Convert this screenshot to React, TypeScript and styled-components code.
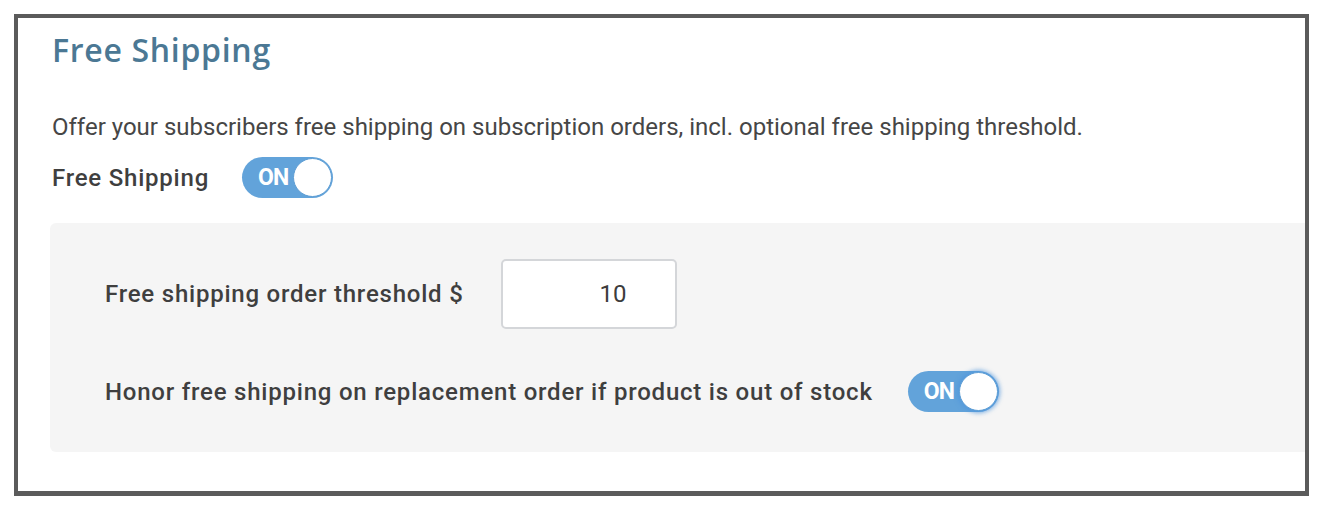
import React from "react";
import styled, { createGlobalStyle } from "styled-components";

const Global = createGlobalStyle`
  html, body { margin: 0; padding: 0; background: #ffffff; }
  body { font-family: Roboto, "Liberation Sans", sans-serif; }
`;

const Frame = styled.div`
  box-sizing: border-box;
  margin: 14px 13px 0 14px;
  height: 482px;
  border: 4px solid #5b5b5b;
  border-bottom-width: 5px;
  background: #fff;
  display: flex;
  flex-direction: column;
  padding: 0 0 0 32px;
  overflow: hidden;
`;

const Title = styled.h2`
  margin: 12px 0 0 2px;
  font-family: "Open Sans", "Liberation Sans", sans-serif;
  font-weight: 600;
  font-size: 32px;
  line-height: 40px;
  color: #4b7894;
  letter-spacing: 0.7px;
`;

const Description = styled.p`
  margin: 43px 0 0 2px;
  font-size: 24px;
  line-height: 28px;
  color: #464646;
`;

const ToggleRow = styled.div<{ $gap: number }>`
  display: flex;
  align-items: center;
  gap: ${(p) => p.$gap}px;
`;

const MainRow = styled(ToggleRow)`
  margin: 16px 0 0 2px;
`;

const Label = styled.span`
  font-size: 24px;
  line-height: 28px;
  font-weight: 500;
  color: #3f3f3f;
  letter-spacing: 0.78px;
`;

const Switch = styled.div`
  position: relative;
  flex: none;
  box-sizing: border-box;
  width: 91px;
  height: 41px;
  border-radius: 21px;
  background: #62a3da;
  display: flex;
  align-items: center;
  padding-left: 16px;
  color: #fff;
  font-weight: 700;
  font-size: 23px;
  letter-spacing: -0.8px;
`;

const Knob = styled.span<{ $glow?: boolean }>`
  position: absolute;
  right: 1px;
  top: 1px;
  width: 39px;
  height: 39px;
  border-radius: 50%;
  background: #fff;
  box-sizing: border-box;
  border: 1px solid #5d9dd4;
  box-shadow: ${(p) => (p.$glow ? "0 0 4px 2px rgba(80,150,220,0.75)" : "none")};
`;

const Panel = styled.div`
  margin-top: 25px;
  height: 229px;
  box-sizing: border-box;
  background: #f5f5f5;
  border-radius: 6px 0 0 6px;
  padding: 36px 0 0 55px;
  display: flex;
  flex-direction: column;
  gap: 42px;
`;

const FieldRow = styled.div`
  display: flex;
  align-items: center;
  gap: 37px;
`;

const NumberBox = styled.div`
  box-sizing: border-box;
  width: 176px;
  height: 70px;
  background: #fff;
  border: 2px solid #d4d6d9;
  border-radius: 5px;
  display: flex;
  align-items: center;
  justify-content: flex-end;
  padding-right: 48px;
  font-size: 24px;
  color: #3c3c3c;
`;

function Toggle({ glow }: { glow?: boolean }) {
  return (
    <Switch>
      ON
      <Knob $glow={glow} />
    </Switch>
  );
}

export default function App() {
  return (
    <>
      <Global />
      <Frame>
        <Title>Free Shipping</Title>
        <Description>
          Offer your subscribers free shipping on subscription orders, incl. optional free shipping threshold.
        </Description>
        <MainRow $gap={33}>
          <Label>Free Shipping</Label>
          <Toggle />
        </MainRow>
        <Panel>
          <FieldRow>
            <Label>Free shipping order threshold $</Label>
            <NumberBox>10</NumberBox>
          </FieldRow>
          <ToggleRow $gap={35}>
            <Label>Honor free shipping on replacement order if product is out of stock</Label>
            <Toggle glow />
          </ToggleRow>
        </Panel>
      </Frame>
    </>
  );
}
